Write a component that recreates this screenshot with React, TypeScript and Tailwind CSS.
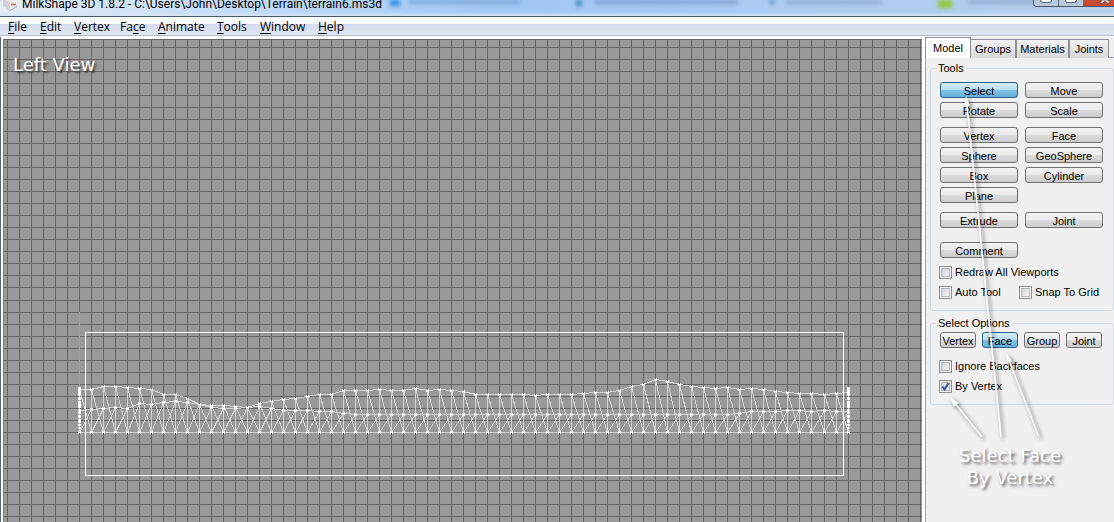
import React from "react";

const SANS = "font-['Liberation_Sans',sans-serif]";

/* ---------- terrain mesh ---------- */

const TOP = [
  389, 389, 386, 386, 387, 388, 389, 394, 394, 398, 404, 405, 405, 406, 407, 403, 401, 399, 398, 396, 394, 394,
  390, 390, 390, 389, 390, 390, 388, 390, 389, 390, 391, 394, 394, 394, 394, 394, 395, 394, 394, 394, 393, 392,
  392, 390, 386, 384, 379, 381, 384, 386, 387, 388, 387, 389, 388, 389, 391, 392, 393, 393, 394, 393, 392,
];
const MID = [
  410, 409, 408, 407, 408, 403, 404, 402, 401, 402, 404, 407, 408, 408, 407, 406, 408, 410, 410, 410, 411, 411,
  413, 414, 414, 414, 414, 414, 414, 414, 414, 414, 414, 414, 414, 414, 414, 414, 414, 414, 414, 414, 414, 414,
  414, 414, 414, 414, 414, 414, 414, 414, 414, 414, 414, 413, 411, 411, 411, 410, 410, 411, 410, 411, 411,
];

/* viewport origin inside the window */
const OX = 3;
const OY = 39;
const BASE = 432 - OY;

const gx = (i: number) => 79 - OX + i * 12 + (i > 61 ? 1 : 0);
const last = TOP.length - 1;

const columns = Array.from({ length: 200 }, (_, i) => gx(i - 6));
const rows = Array.from({ length: 120 }, (_, i) => 8 + i * 12 + (i > 20 ? 1 : 0));

function meshPath() {
  let d = "";
  for (let i = 0; i <= last; i++) {
    const x = gx(i) + 0.5;
    const t = TOP[i] - OY + 0.5;
    const m = MID[i] - OY + 0.5;
    const b = BASE + 0.5;
    d += `M${x} ${t}V${b}`;
    if (i < last) {
      const nx = gx(i + 1) + 0.5;
      d += `M${x} ${t}L${nx} ${TOP[i + 1] - OY + 0.5}`;
      d += `M${x} ${m}L${nx} ${MID[i + 1] - OY + 0.5}`;
      d += `M${x} ${b}H${nx}`;
      d += `M${x} ${t}L${nx} ${b}`;
      d += `M${x} ${b}L${nx} ${MID[i + 1] - OY + 0.5}`;
    }
  }
  return d;
}

function Edge({ x }: { x: number }) {
  return (
    <g fill="#fff">
      <rect x={x - 1} y={387 - OY} width="3" height="9" />
      <rect x={x - 1} y={397 - OY} width="3" height="3" />
      <rect x={x - 1} y={401 - OY} width="3" height="7" />
      <rect x={x - 1} y={409 - OY} width="3" height="5" />
      <rect x={x - 1} y={415 - OY} width="3" height="3" />
      <rect x={x - 1} y={419 - OY} width="3" height="4" />
      <rect x={x - 1} y={424 - OY} width="3" height="2" />
      <rect x={x - 1} y={427 - OY} width="3" height="2" />
    </g>
  );
}

function Marker({ x, y }: { x: number; y: number }) {
  return <path d={`M${x - 1} ${y - 1}h1v1h1v-1h1v3h-1v-1h-1v1h-1z`} fill="#fff" />;
}

function Viewport() {
  return (
    <main className="relative min-w-0 flex-1 overflow-hidden bg-[#999]">
      <svg className="absolute inset-0 h-full w-full" shapeRendering="crispEdges" aria-label="Left view">
        {columns.map((x) => (
          <rect key={x} x={x} y="0" width="1" height="100%" fill="#666" />
        ))}
        {rows.map((y) => (
          <rect key={y} x="0" y={y} width="100%" height="1" fill="#666" />
        ))}
        <rect x="0" y="0" width="100%" height="1" fill="#666" />
        <rect x="0" y="0" width="1" height="100%" fill="#858585" />
        <rect x={gx(0)} y={312 - OY} width="1" height="75" fill="#9a9fd0" />
        <path d={meshPath()} stroke="#d2d2d2" strokeWidth="1" fill="none" />
        {TOP.map((t, i) => (
          <g key={i} fill="#fff">
            <Marker x={gx(i)} y={t - OY} />
            <Marker x={gx(i)} y={MID[i] - OY} />
            <Marker x={gx(i)} y={BASE} />
          </g>
        ))}
        <Edge x={gx(0)} />
        <Edge x={gx(last)} />
        <rect x={85.5 - OX} y={332.5 - OY} width="758" height="143" fill="none" stroke="#fff" />
      </svg>
      <p className="relative px-[10px] pt-4 font-['DejaVu_Sans',sans-serif] text-[18px] leading-5 text-white [text-shadow:2px_2px_2px_rgba(0,0,0,0.55)]">
        Left View
      </p>
    </main>
  );
}

/* ---------- window chrome ---------- */

function TitleBar() {
  return (
    <header className="relative flex h-4 shrink-0 items-end justify-between overflow-hidden bg-gradient-to-r from-[#e3ecf6] via-[#a0c8f5] via-45% to-[#b7cfec] pl-[3px]">
      <div className="absolute inset-x-0 top-0 flex h-4 items-start pl-[390px] blur-[2px]" aria-hidden="true">
        <span className="h-1.5 w-2.5 shrink-0 bg-[#2b8de0]" />
        <span className="ml-2 h-1 w-28 shrink-0 bg-[#7fa6d8]" />
        <span className="ml-14 size-1.5 shrink-0 bg-[#3d86b8]" />
        <span className="ml-3 h-1 w-36 shrink-0 bg-[#7d9fd2]" />
        <span className="ml-8 size-1 shrink-0 bg-[#3d86b8]" />
        <span className="ml-3 h-1 w-24 shrink-0 bg-[#8fabd0]" />
        <span className="ml-14 h-2 w-3.5 shrink-0 bg-[#93c83a]" />
        <span className="ml-4 h-1 w-20 shrink-0 bg-[#8ea9cc]" />
      </div>
      <div className="absolute inset-x-0 bottom-0 h-1 bg-gradient-to-b from-transparent to-[#d5e4f5]" />
      <div className="relative flex items-end gap-1 pb-[5px]">
        <svg width="15" height="12" viewBox="0 0 15 12" aria-hidden="true">
          <path d="M0 0h14v7l-7 4-7-4z" fill="#ececec" />
          <path d="M0 0l7 3v8l-7-4z" fill="#d2d2d2" />
          <path d="M8 6l2-1 1 1 2-1" stroke="#d4553d" strokeWidth="1.3" fill="none" />
          <path d="M7 11l7-4v1l-7 4-5-3z" fill="#9da9b6" />
        </svg>
        <h1 className="font-['Roboto','Noto_Sans',sans-serif] text-[12px] leading-[14px] whitespace-nowrap text-black">
          MilkShape 3D 1.8.2 - C:\Users\John\Desktop\Terrain\terrain6.ms3d
        </h1>
      </div>
      <div className="relative flex h-[7px] self-start overflow-hidden rounded-bl border-b border-l border-[#47566a]">
        <button aria-label="Minimize" className="flex w-[25px] justify-center border-r border-[#5b6b80] bg-[#b9c9dc]">
          <span className="h-[3px] w-3 rounded-b-sm border border-t-0 border-[#5a6472] bg-white" />
        </button>
        <button aria-label="Maximize" className="flex w-[25px] justify-center border-r border-[#5b6b80] bg-[#b9c9dc]">
          <span className="h-[3px] w-3 rounded-b-sm border border-t-0 border-[#5a6472] bg-white" />
        </button>
        <button aria-label="Close" className="flex w-[30px] justify-center bg-[#c94a33] pl-3">
          <svg width="12" height="4" viewBox="0 0 12 4">
            <path d="M3 0L1 3h3l2-2 2 2h3L9 0z" fill="#fff" stroke="#5a4a58" strokeWidth=".8" />
          </svg>
        </button>
      </div>
    </header>
  );
}

const MENUS: [string, string, string, string][] = [
  ["", "F", "ile", "w-8"],
  ["", "E", "dit", "w-[34px]"],
  ["", "V", "ertex", "w-[46px]"],
  ["Fa", "c", "e", "w-[38px]"],
  ["", "A", "nimate", "w-[59px]"],
  ["", "T", "ools", "w-[43px]"],
  ["", "W", "indow", "w-[58px]"],
  ["", "H", "elp", "w-10"],
];

function MenuBar() {
  return (
    <nav className="flex h-[21px] shrink-0 items-center border-t border-[#46586c] bg-[linear-gradient(#fff_0,#f4f6fb_7px,#d5dbee_7px,#e2e6f5_18px,#b5b8c4_18px,#b5b8c4_19px,#fff_19px)] pl-2">
      {MENUS.map(([a, k, b, w]) => (
        <button
          key={k}
          className={`${w} shrink-0 text-left font-['Open_Sans','Noto_Sans',sans-serif] text-[12px] leading-4 whitespace-nowrap text-black`}
        >
          {a}
          <span className="underline underline-offset-2">{k}</span>
          {b}
        </button>
      ))}
    </nav>
  );
}

/* ---------- side panel ---------- */

function ToolButton({ label, active }: { label: string; active?: boolean }) {
  const skin = active
    ? "border-[#2c628b] bg-[linear-gradient(#d9eefa_0,#b4dcf3_50%,#84c3e6_50%,#66b0dc_100%)]"
    : "border-[#707070] bg-[linear-gradient(#f3f3f3_0,#ebebeb_50%,#dcdcdc_50%,#cdcdcd_100%)]";
  return (
    <button
      aria-pressed={!!active}
      className={`flex h-4 min-w-0 items-center justify-center rounded-[3px] border pt-0.5 leading-3 text-black ${skin}`}
    >
      {label}
    </button>
  );
}

function Check({ label, checked }: { label: string; checked?: boolean }) {
  return (
    <label className="flex h-5 items-center gap-[3px] whitespace-nowrap">
      <span className="grid size-[13px] place-items-center border border-[#8e8f8f] bg-[#f4f4f4]">
        <input
          type="checkbox"
          defaultChecked={checked}
          className="peer col-start-1 row-start-1 size-[9px] appearance-none border border-[#b4b9be] bg-gradient-to-br from-[#cdd2d8] to-[#f6f6f6]"
        />
        <svg
          className="pointer-events-none invisible col-start-1 row-start-1 peer-checked:visible"
          width="9"
          height="9"
          viewBox="0 0 9 9"
        >
          <path d="M1.5 4.5L3.5 7.5L7.5 1" stroke="#3c51a0" strokeWidth="2" fill="none" />
        </svg>
      </span>
      {label}
    </label>
  );
}

function Tabs() {
  const idle =
    "h-[19px] border border-b-0 border-[#8e8f94] bg-gradient-to-b from-[#f3f3f3] to-[#d8d8d8] text-center leading-[19px]";
  return (
    <div role="tablist" className="flex items-end shadow-[inset_0_-1px_0_#a0a4ac]">
      <button role="tab" aria-selected="true" className="h-[21px] w-[46px] border border-b-0 border-[#8e8f94] bg-white leading-[19px]">
        Model
      </button>
      <button role="tab" aria-selected="false" className={`w-[45px] border-l-0 ${idle}`}>
        Groups
      </button>
      <button role="tab" aria-selected="false" className={`w-[53px] ${idle}`}>
        Materials
      </button>
      <button role="tab" aria-selected="false" className={`w-10 ${idle}`}>
        Joints
      </button>
    </div>
  );
}

const ARROWS = [
  { from: [57, 400], to: [25, 360] },
  { from: [76, 400], to: [41, 59] },
  { from: [114, 400], to: [81, 316] },
];

function Arrow({ from, to }: { from: number[]; to: number[] }) {
  const dx = to[0] - from[0];
  const dy = to[1] - from[1];
  const len = Math.hypot(dx, dy);
  const ux = dx / len;
  const uy = dy / len;
  const bx = to[0] - ux * 10;
  const by = to[1] - uy * 10;
  return (
    <g>
      <path d={`M${from[0]} ${from[1]}L${bx} ${by}`} stroke="#fff" strokeWidth="1.6" />
      <path d={`M${to[0]} ${to[1]}L${bx - uy * 3} ${by + ux * 3}L${bx + uy * 3} ${by - ux * 3}Z`} fill="#fff" />
    </g>
  );
}

function Annotation() {
  return (
    <div className="pointer-events-none absolute inset-0">
      <svg className="absolute inset-0 h-full w-full drop-shadow-[2px_2px_2px_rgba(0,0,0,0.6)]" aria-hidden="true">
        {ARROWS.map((a, i) => (
          <Arrow key={i} from={a.from} to={a.to} />
        ))}
      </svg>
      <p className="absolute top-[408px] left-[34px] text-center font-['DejaVu_Sans',sans-serif] text-[18px] leading-[22px] whitespace-nowrap text-white [text-shadow:2px_2px_3px_rgba(0,0,0,0.65)]">
        Select Face
        <br />
        By Vertex
      </p>
    </div>
  );
}

function SidePanel() {
  const box = "rounded-[3px] border border-[#d0dbe4] px-[9px]";
  const grid = "grid grid-cols-2 gap-x-[7px] gap-y-1";
  return (
    <aside className={`relative w-[189px] shrink-0 bg-[#f0f0f0] ${SANS} text-[11px] leading-3 text-black`}>
      <Tabs />
      <div className="flex h-full flex-col gap-[6px] border-l border-[#a0a0a0] pt-1 pl-1">
        <fieldset className={`${box} pb-2`}>
          <legend className="-ml-1 px-0.5">Tools</legend>
          <div className="flex flex-col pt-2 pr-px">
            <div className={grid}>
              <ToolButton label="Select" active />
              <ToolButton label="Move" />
              <ToolButton label="Rotate" />
              <ToolButton label="Scale" />
            </div>
            <div className={`${grid} pt-[9px]`}>
              <ToolButton label="Vertex" />
              <ToolButton label="Face" />
              <ToolButton label="Sphere" />
              <ToolButton label="GeoSphere" />
              <ToolButton label="Box" />
              <ToolButton label="Cylinder" />
              <ToolButton label="Plane" />
            </div>
            <div className={`${grid} pt-[9px]`}>
              <ToolButton label="Extrude" />
              <ToolButton label="Joint" />
            </div>
            <div className={`${grid} pt-[14px]`}>
              <ToolButton label="Comment" />
            </div>
          </div>
          <div className="-ml-px grid grid-cols-[80px_1fr] pt-1">
            <div className="col-span-2">
              <Check label="Redraw All Viewports" />
            </div>
            <Check label="Auto Tool" />
            <Check label="Snap To Grid" />
          </div>
        </fieldset>
        <fieldset className={`${box} pb-2`}>
          <legend className="-ml-1 px-0.5">Select Options</legend>
          <div className="grid grid-cols-4 gap-[6px] pt-[3px] pr-0.5">
            <ToolButton label="Vertex" />
            <ToolButton label="Face" active />
            <ToolButton label="Group" />
            <ToolButton label="Joint" />
          </div>
          <div className="-ml-px pt-2">
            <Check label="Ignore Backfaces" />
            <Check label="By Vertex" checked />
          </div>
        </fieldset>
      </div>
      <Annotation />
    </aside>
  );
}

export default function App() {
  return (
    <div className="flex h-screen flex-col overflow-hidden bg-white">
      <TitleBar />
      <MenuBar />
      <div className="flex min-h-0 flex-1 border-l border-[#5a6a7c] bg-white">
        <div className="flex min-w-0 flex-1 pt-0.5 pr-[3px] pl-0.5">
          <Viewport />
        </div>
        <SidePanel />
      </div>
    </div>
  );
}
